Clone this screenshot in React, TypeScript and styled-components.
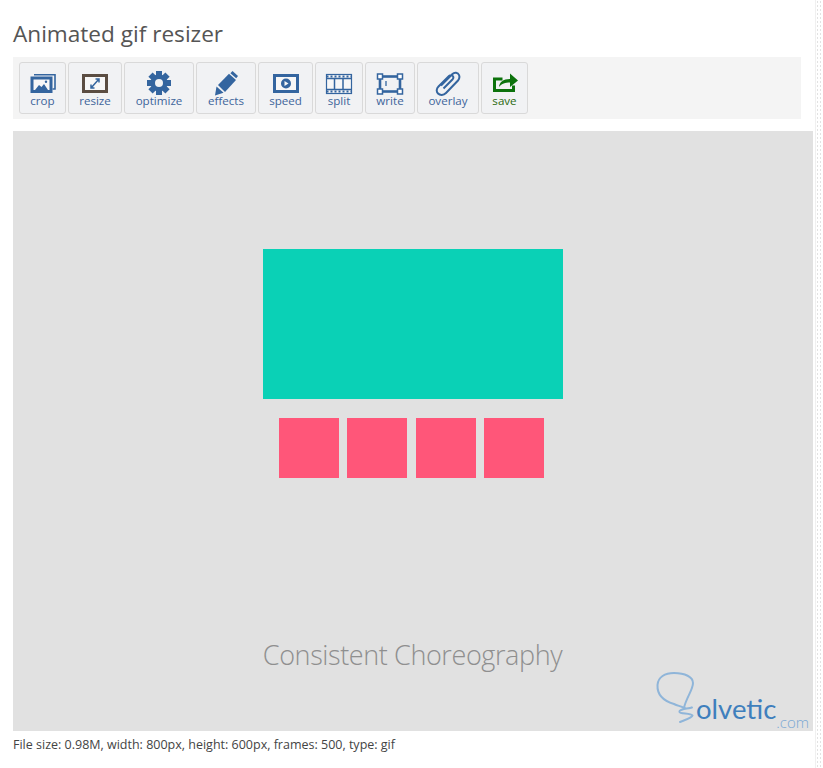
import styled, {createGlobalStyle} from "styled-components";

const GlobalStyle = createGlobalStyle`
  html, body {
    margin: 0;
    padding: 0;
    background: #fff;
  }
  body {
    font-family: "Open Sans", "Noto Sans", sans-serif;
    color: #444;
  }
`;

const Page = styled.div`
  display: flex;
  width: 823px;
  height: 768px;
  overflow: hidden;
`;
const Main = styled.main`
  width: 800px;
  padding-left: 13px;
`;
const Edge = styled.div`
  width: 7px;
  margin-left: 2px;
  border-left: 1px solid #f0f0f0;
  background-image: radial-gradient(#e2e2e2 0.7px, transparent 0.8px);
  background-size: 3px 4px;
`;
const Title = styled.h1`
  margin: 0;
  padding-top: 20px;
  height: 37px;
  font-size: 22.6px;
  line-height: 28px;
  font-weight: 400;
  color: #555;
`;
const Toolbar = styled.div`
  display: flex;
  gap: 2px;
  padding: 5px 6px;
  width: 788px;
  box-sizing: border-box;
  height: 62px;
  background: #f4f4f4;
`;
const ToolButton = styled.button<{ $width: number; $save?: boolean }>`
  display: flex;
  flex-direction: column;
  align-items: center;
  width: ${(props) => props.$width}px;
  height: 52px;
  padding: 0;
  box-sizing: border-box;
  border: 1px solid #d9d9d9;
  border-radius: 3px;
  background: #f1f2f4;
  color: ${(props) => (props.$save ? "#2a6a10" : "#3e659b")};
  font-family: inherit;
  font-size: 11.6px;
  line-height: 14px;
  svg {
    display: block;
    flex: none;
    width: 28px;
    height: 26px;
    margin-top: 7px;
    margin-bottom: -2px;
  }
`;
const Canvas = styled.div`
  position: relative;
  display: flex;
  flex-direction: column;
  align-items: center;
  width: 800px;
  height: 600px;
  margin-top: 12px;
  padding-top: 118px;
  box-sizing: border-box;
  background: #e1e1e1;
`;
const Banner = styled.div`
  width: 300px;
  height: 150px;
  background: #0ad1b6;
`;
const Squares = styled.div`
  display: flex;
  gap: 8.5px;
  margin-top: 19px;
  margin-right: 3px;
`;
const Square = styled.div`
  width: 60px;
  height: 60px;
  background: #ff5679;
`;
const Caption = styled.div`
  margin-top: 157px;
  margin-right: 1px;
  font-size: 27px;
  line-height: 40px;
  font-weight: 300;
  letter-spacing: -0.4px;
  color: #8f8f8f;
`;
const Watermark = styled.div`
  position: absolute;
  right: 4px;
  bottom: 1px;
  width: 156px;
  height: 62px;
  svg {
    position: absolute;
    left: 0;
    top: 0;
  }
`;
const WatermarkName = styled.span`
  position: absolute;
  left: 43px;
  top: 24px;
  font-family: Lato, sans-serif;
  font-size: 27.5px;
  line-height: 34px;
  color: #3f7fbd;
`;
const WatermarkDomain = styled.span`
  position: absolute;
  right: 0;
  bottom: 0;
  font-family: "Open Sans", sans-serif;
  font-size: 15px;
  line-height: 16px;
  font-weight: 300;
  color: #7aa8d4;
`;
const Status = styled.p`
  margin: 6px 0 0;
  font-size: 12.5px;
  line-height: 16px;
  color: #444;
`;

const blue = "#34659f";

const CropIcon = () => (
  <svg viewBox="0 0 28 26">
    <path d="M5 4.800h21V19h-2.500" fill="none" stroke={blue} strokeWidth="1.600"/>
    <rect x="3" y="8" width="19" height="13.500" fill="#f7f7f7" stroke={blue} strokeWidth="3"/>
    <path d="M6 20l4-5 2.500 2 2.500-3 4 6z" fill={blue}/>
    <circle cx="17" cy="11.800" r="1.200" fill={blue}/>
  </svg>
);
const ResizeIcon = () => (
  <svg viewBox="0 0 28 26">
    <rect x="2.500" y="5.500" width="23" height="16" fill="#f7f7f7" stroke="#5b4d42" strokeWidth="3"/>
    <path d="M10 18l8-9M14.500 9H18v3.500M10 14.500V18h3.500" fill="none" stroke={blue} strokeWidth="1.500"/>
  </svg>
);
const GearIcon = () => (
  <svg viewBox="0 0 28 26">
    <g fill={blue}>
      <circle cx="14" cy="13" r="8.500"/>
      {[0, 45, 90, 135].map((angle) => (
        <rect key={angle} x="11" y="1" width="6" height="24" transform={`rotate(${angle} 14 13)`}/>
      ))}
    </g>
    <circle cx="14" cy="13" r="4" fill="#f1f2f4"/>
  </svg>
);
const PencilIcon = () => (
  <svg viewBox="0 0 28 26" fill={blue}>
    <path d="M20.500 1l5.500 5-1.800 2.300-5.800-5z"/>
    <path d="M6 15L17 3.800l7 6.200L13 22z"/>
    <path d="M4.500 16.500l7 6.200-8.500 2.800z"/>
  </svg>
);
const SpeedIcon = () => (
  <svg viewBox="0 0 28 26">
    <rect x="2.500" y="5.500" width="23" height="16" fill="#f7f7f7" stroke={blue} strokeWidth="3"/>
    <circle cx="14" cy="13.500" r="5" fill={blue}/>
    <path d="M12.500 11l4 2.500-4 2.500z" fill="#f7f7f7"/>
  </svg>
);
const SplitIcon = () => (
  <svg viewBox="0 0 28 26">
    <rect x="1.500" y="4.500" width="25" height="19" fill="#f7f7f7" stroke={blue} strokeWidth="1.200"/>
    <path d="M1.500 8.500h25M1.500 19.500h25M9.500 8.500v11M18 8.500v11" stroke={blue} strokeWidth="1.500"/>
    <path d="M1.500 6.500h25M1.500 21.500h25" stroke={blue} strokeWidth="2.200" strokeDasharray="2 2" fill="none"/>
  </svg>
);
const WriteIcon = () => (
  <svg viewBox="0 0 28 26">
    <rect x="4" y="6.500" width="20" height="15" fill="none" stroke={blue} strokeWidth="2.600"/>
    {[[1.500, 4], [21.500, 4], [1.500, 19], [21.500, 19]].map(([x, y]) => (
      <rect key={`${x}-${y}`} x={x} y={y} width="5" height="5" fill="#fff" stroke={blue} strokeWidth="1.500"/>
    ))}
    <path d="M10 11v5" stroke={blue} strokeWidth="1.300"/>
  </svg>
);
const ClipIcon = () => (
  <svg viewBox="0 0 28 26">
    <path
      d="M7 15.500L18.500 4c2-2 5.500-1.500 6.500 1s.3 4-1 5.500L12 23c-2.500 2.500-6 2.500-8 .5s-1.500-5 .5-7L15 6c1.300-1.300 3-1 3.800 0s.7 2.300-.4 3.500L9.500 18.500"
      fill="none" stroke={blue} strokeWidth="2"/>
  </svg>
);
const SaveIcon = () => (
  <svg viewBox="0 0 28 26">
    <path d="M3.500 9h8M3.500 7.500V20.500h19v-5" fill="none" stroke="#0c720c" strokeWidth="3"/>
    <path d="M8 17c.5-5 4-8 11-8V3.500L27 10.500l-8 6.500V12.500c-5 0-8 1-11 4.500z" fill="#0c720c"/>
  </svg>
);

const tools = [
  {label: "crop", width: 47, icon: <CropIcon/>},
  {label: "resize", width: 54, icon: <ResizeIcon/>},
  {label: "optimize", width: 70, icon: <GearIcon/>},
  {label: "effects", width: 60, icon: <PencilIcon/>},
  {label: "speed", width: 55, icon: <SpeedIcon/>},
  {label: "split", width: 48, icon: <SplitIcon/>},
  {label: "write", width: 50, icon: <WriteIcon/>},
  {label: "overlay", width: 62, icon: <ClipIcon/>},
  {label: "save", width: 47, icon: <SaveIcon/>, save: true},
];

function App() {
  return (
    <Page>
      <GlobalStyle/>
      <Main>
        <Title>Animated gif resizer</Title>
        <Toolbar>
          {tools.map((tool) => (
            <ToolButton key={tool.label} $width={tool.width} $save={tool.save}>
              {tool.icon}
              {tool.label}
            </ToolButton>
          ))}
        </Toolbar>
        <Canvas>
          <Banner/>
          <Squares>
            <Square/>
            <Square/>
            <Square/>
            <Square/>
          </Squares>
          <Caption>Consistent Choreography</Caption>
          <Watermark>
            <svg width="60" height="62" viewBox="0 0 60 62" fill="none">
              <path
                d="M31 40C28 38 25 38 21 36 11 33 4 27 4.500 17 5 9 12 5 21 5 32 5 40 9 40 15 40 22 33 30 31 40 34 41 37 40 39 39.500 34 41 26 41 26.500 44 27 46 38 45 39.500 47.500 39 50 32 52 27 54"
                stroke="#8fb5d9" strokeWidth="2" strokeLinecap="round" strokeLinejoin="round"/>
            </svg>
            <WatermarkName>olvetic</WatermarkName>
            <WatermarkDomain>.com</WatermarkDomain>
          </Watermark>
        </Canvas>
        <Status>File size: 0.98M, width: 800px, height: 600px, frames: 500, type: gif</Status>
      </Main>
      <Edge/>
    </Page>
  );
}

export default App;
